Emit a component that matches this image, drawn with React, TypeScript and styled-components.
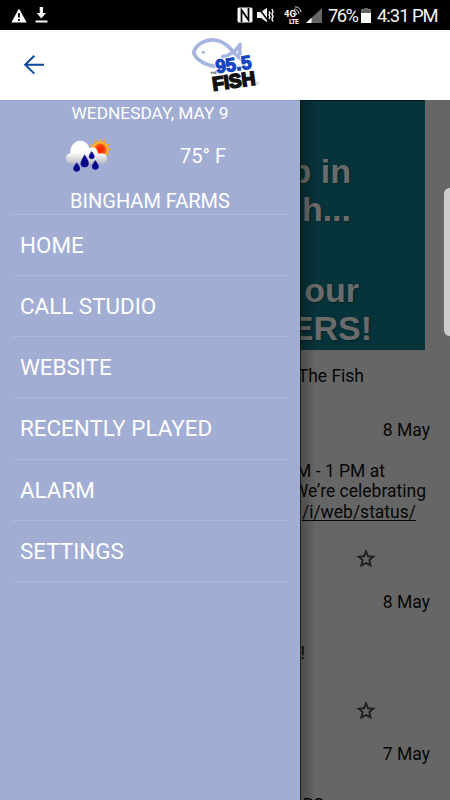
import React from "react";
import styled, { createGlobalStyle } from "styled-components";

const GlobalStyle = createGlobalStyle`
  * { box-sizing: border-box; }
  body { margin: 0; background: #666; font-family: Roboto, sans-serif; }
`;

const Screen = styled.div`
  width: 450px;
  height: 800px;
  display: flex;
  flex-direction: column;
  overflow: hidden;
`;

const StatusBar = styled.header`
  height: 30px;
  flex: none;
  background: #000;
  color: #f4f4f4;
  display: flex;
  align-items: center;
  padding: 0 12px 0 11px;
  line-height: 30px;
  white-space: nowrap;
`;

const StatusIcon = styled.svg<{ $gap?: number }>`
  display: block;
  flex: none;
  margin-right: ${(p) => p.$gap ?? 0}px;
`;

const StatusText = styled.span<{ $width: number; $gap?: number; $tracking: number }>`
  width: ${(p) => p.$width}px;
  margin-right: ${(p) => p.$gap ?? 0}px;
  font-size: 18.4px;
  letter-spacing: ${(p) => p.$tracking}px;
  padding-top: 2px;
`;

const Spacer = styled.div`
  flex: 1;
`;

const AppBar = styled.nav`
  height: 70px;
  flex: none;
  background: #fff;
  display: grid;
  grid-template-columns: 180px 90px 1fr;
  align-items: center;
`;

const BackButton = styled.button`
  border: 0;
  background: none;
  padding: 0 0 0 23px;
  display: flex;
`;

const Logo = styled.svg`
  display: block;
`;

const Body = styled.main`
  flex: 1;
  min-height: 0;
  display: grid;
  grid-template-columns: 300px 150px;
`;

const Drawer = styled.aside`
  background: #a2add4;
  color: #fff;
  box-shadow: inset 0 1px 0 #94a0cf;
`;

const Weather = styled.section`
  height: 113.6px;
  display: flex;
  flex-direction: column;
  align-items: center;
`;

const WeatherDate = styled.div`
  height: 26px;
  font-size: 17.3px;
  line-height: 26px;
`;

const Conditions = styled.div`
  height: 60px;
  width: 100%;
  display: flex;
  align-items: center;
  padding-left: 64px;
`;

const Temperature = styled.span`
  margin-left: 68px;
  font-size: 20px;
`;

const City = styled.div`
  height: 27px;
  font-size: 20px;
  line-height: 30px;
`;

const Menu = styled.ul`
  list-style: none;
  margin: 0 12px;
  padding: 0;
  border-top: 1px solid #adb8da;
`;

const MenuItem = styled.li`
  height: 61.25px;
  padding-left: 8px;
  font-size: 22.4px;
  line-height: 61px;
  border-bottom: 1px solid #adb8da;
  white-space: nowrap;
`;

const Feed = styled.section`
  position: relative;
  background: #666;
  color: #060606;
  overflow: hidden;
  display: flex;
  flex-direction: column;
`;

const DrawerShadow = styled.div`
  position: absolute;
  inset: 0 auto 0 0;
  width: 16px;
  border-left: 1px solid rgba(20, 20, 0, 0.8);
  background: linear-gradient(to right, rgba(0, 0, 0, 0.25), rgba(0, 0, 0, 0));
`;

const ScrollHandle = styled.div`
  position: absolute;
  top: 88px;
  right: -6px;
  width: 12px;
  height: 148px;
  border-radius: 6px;
  background: #cdcdcd;
  box-shadow: 0 0 1px #999;
`;

const Banner = styled.div`
  width: 125px;
  height: 250px;
  flex: none;
  background: #07333a;
  border-top: 1px solid #031b1f;
  padding-top: 51px;
  color: #6b6b6b;
  font: bold 34px/38px "Liberation Sans", Arial, sans-serif;
  text-shadow: 1px 1px 2px rgba(0, 0, 0, 0.3);
`;

const BannerLine = styled.div<{ $right: number; $top?: number }>`
  display: flex;
  justify-content: flex-end;
  padding-right: ${(p) => p.$right}px;
  margin-top: ${(p) => p.$top ?? 0}px;
  white-space: pre;
`;

const FeedLine = styled.div<{ $top?: number; $right: number }>`
  height: 20.5px;
  flex: none;
  margin-top: ${(p) => p.$top ?? 0}px;
  padding-right: ${(p) => p.$right}px;
  display: flex;
  justify-content: flex-end;
  font-size: 17.5px;
  line-height: 20.5px;
  white-space: pre;
`;

const FeedLink = styled.span`
  text-decoration: underline;
  text-decoration-thickness: 1px;
  text-underline-offset: 2px;
  text-decoration-skip-ink: none;
`;

const StarRow = styled.div<{ $top: number }>`
  flex: none;
  height: 20px;
  margin-top: ${(p) => p.$top}px;
  padding-left: 56px;
`;

const Star = () => (
  <svg width="20" height="20" viewBox="0 0 20 20">
    <path
      d="M10 2.4 12 7.3 17.3 7.7 13.3 11.1 14.6 16.4 10 14 5.4 16.4 6.7 11.1 2.7 7.7 8 7.3Z"
      fill="none"
      stroke="#202020"
      strokeWidth="1.9"
    />
  </svg>
);

const WeatherIcon = () => (
  <svg width="48" height="38" viewBox="0 0 144 114">
    <defs>
      <linearGradient id="cloud" x1="0" y1="0" x2="0" y2="1">
        <stop offset="0.5" stopColor="#fff" />
        <stop offset="1" stopColor="#b9b9c2" />
      </linearGradient>
      <radialGradient id="sun">
        <stop offset="0.3" stopColor="#ff2500" />
        <stop offset="0.72" stopColor="#f45a18" />
        <stop offset="1" stopColor="#ffcf3a" />
      </radialGradient>
    </defs>
    <path
      d="M109 2 113 16 124 6 124 20 138 22 130 31 143 38 130 43 137 55 122 54 118 68 75 50 84 33 76 22 91 23 91 9 104 16Z"
      fill="#f3a52a"
    />
    <circle cx="109" cy="38" r="22" fill="url(#sun)" />
    <path
      d="M20 80C2 76 0 53 19 49C17 27 35 7 55 12C68 15 74 25 76 34C91 24 103 38 102 51C118 44 132 54 128 69C126 79 116 81 106 81Z"
      fill="url(#cloud)"
    />
    <g fill="#07078b" stroke="#2633a5" strokeWidth="1">
      <path d="M62 53Q75 72 74 79A12 12 0 0 1 50 79Q50 72 62 53Z" />
      <path d="M83 43Q91 54 91 58A8 8 0 0 1 75 58Q75 54 83 43Z" />
      <path d="M38 77Q48 89 48 94A10 10 0 0 1 28 94Q28 89 38 77Z" />
      <path d="M94 70Q104 83 104 88A10 10 0 0 1 84 88Q84 83 94 70Z" />
    </g>
  </svg>
);

const StationLogo = () => (
  <Logo width="90" height="70" viewBox="0 0 270 210">
    <g fill="none" stroke="#a6b4e2" strokeLinecap="round" strokeLinejoin="round">
      <path
        d="M104 109C73 105 45 86 41 67C49 42 75 28 102 30C133 32 153 57 166 72C175 83 184 88 194 92"
        strokeWidth="11"
      />
      <path d="M128 80C150 76 167 65 180 43C178 60 178 74 184 88" strokeWidth="11" />
    </g>
    <circle cx="70" cy="67" r="5" fill="#a6b4e2" />
    <g transform="rotate(-8 110 128)" fontFamily="Liberation Sans, Arial, sans-serif" fontWeight="bold">
      <text
        x="109" y="130" fontSize="57" textLength="108" lengthAdjust="spacingAndGlyphs"
        fill="#1846c2" stroke="#fff" strokeWidth="9" strokeLinejoin="round" paintOrder="stroke"
      >
        95.5
      </text>
      <text
        x="109" y="130" fontSize="57" textLength="108" lengthAdjust="spacingAndGlyphs"
        fill="#1846c2" stroke="#1846c2" strokeWidth="3.5"
      >
        95.5
      </text>
      <text x="91" y="131" fontSize="11" textLength="19" lengthAdjust="spacingAndGlyphs" fill="#222">THE</text>
      <text
        x="92" y="180" fontSize="58" textLength="130" lengthAdjust="spacingAndGlyphs"
        fill="#111" stroke="#111" strokeWidth="5"
      >
        FISH
      </text>
    </g>
    <circle cx="232" cy="160" r="4" fill="none" stroke="#999" strokeWidth="1.5" />
  </Logo>
);

const menuItems = ["HOME", "CALL STUDIO", "WEBSITE", "RECENTLY PLAYED", "ALARM", "SETTINGS"];

export default function App() {
  return (
    <Screen>
      <GlobalStyle />
      <StatusBar>
        <StatusIcon width="16" height="15" viewBox="0 0 16 15" $gap={8}>
          <path d="M8 .5 15.6 14.5H.4Z" fill="#fff" />
          <path d="M8 5V9.5M8 11V12.8" stroke="#000" strokeWidth="1.8" />
        </StatusIcon>
        <StatusIcon width="13" height="16" viewBox="0 0 13 16">
          <path d="M4.7 0H8V6H11L6.3 11.5 1.7 6H4.7ZM.5 13.5H12.5V15.5H.5Z" fill="#f4f4f4" />
        </StatusIcon>
        <Spacer />
        <StatusIcon width="16" height="16" viewBox="0 0 16 16" $gap={4}>
          <path d="M2 .5H14Q15.5 .5 15.5 2V14Q15.5 15.5 14 15.5H2Q.5 15.5 .5 14V2Q.5 .5 2 .5Z" fill="#f4f4f4" />
          <path d="M4.5 15V3L11.5 13V1" fill="none" stroke="#000" strokeWidth="1.7" />
        </StatusIcon>
        <StatusIcon width="17" height="16" viewBox="0 0 17 16" $gap={10}>
          <path d="M0 5H4L10 .8V15.2L4 11H0Z" fill="#f4f4f4" />
          <path d="M1 0 12 15" stroke="#000" strokeWidth="1.4" />
          <path d="M12 4.5 13 6 12 8 13 10 12 12M15 2 16 4.5 15 7 16 9.5 15 12 16 14.5" fill="none" stroke="#f4f4f4" strokeWidth="1.5" />
        </StatusIcon>
        <StatusIcon width="18" height="18" viewBox="0 0 18 18" $gap={4}>
          <text x="0" y="11" fill="#fff" fontSize="9.5" fontWeight="bold" textLength="12">4G</text>
          <text x="5" y="17.5" fill="#fff" fontSize="7" fontWeight="bold" textLength="10">LTE</text>
          <path d="M10 3Q14 3 15 8M11 .8Q16 1 17 6M10 5.5Q12 5.5 13 9" fill="none" stroke="#ddd" strokeWidth="1" />
        </StatusIcon>
        <StatusIcon width="16" height="15" viewBox="0 0 16 15" $gap={6}>
          <path d="M0 15 16 0V15Z" fill="#666" />
          <path d="M0 15 5.5 9.8V15Z" fill="#fff" />
        </StatusIcon>
        <StatusText $width={30} $gap={3} $tracking={-1.6}>76%</StatusText>
        <StatusIcon width="10" height="15" viewBox="0 0 10 15" $gap={6}>
          <path d="M3 0H7V1.5H10V15H0V1.5H3Z" fill="#fff" />
          <path d="M3 0H7V1.5H10V5H0V1.5H3Z" fill="#666" />
        </StatusIcon>
        <StatusText $width={61} $tracking={-1}>4:31 PM</StatusText>
      </StatusBar>
      <AppBar>
        <BackButton aria-label="Back">
          <svg width="22" height="20" viewBox="0 0 22 20">
            <path d="M21 9.7H2.2M11.3 .8 2.2 9.7 11.3 18.6" fill="none" stroke="#0f47a1" strokeWidth="2" />
          </svg>
        </BackButton>
        <StationLogo />
      </AppBar>
      <Body>
        <Drawer>
          <Weather>
            <WeatherDate>WEDNESDAY, MAY 9</WeatherDate>
            <Conditions>
              <WeatherIcon />
              <Temperature>75° F</Temperature>
            </Conditions>
            <City>BINGHAM FARMS</City>
          </Weather>
          <Menu>
            {menuItems.map((label) => (
              <MenuItem key={label}>{label}</MenuItem>
            ))}
          </Menu>
        </Drawer>
        <Feed>
          <Banner>
            <BannerLine $right={74}>p in</BannerLine>
            <BannerLine $right={74}>h...</BannerLine>
            <BannerLine $right={66} $top={43}>our</BannerLine>
            <BannerLine $right={53}>ERS!</BannerLine>
          </Banner>
          <FeedLine $top={16} $right={86}>The Fish</FeedLine>
          <FeedLine $top={33.5} $right={20}>8 May</FeedLine>
          <FeedLine $top={20} $right={65}>M - 1 PM at</FeedLine>
          <FeedLine $right={24}>We’re celebrating</FeedLine>
          <FeedLine $right={34}><FeedLink>/i/web/status/</FeedLink></FeedLine>
          <StarRow $top={27}><Star /></StarRow>
          <FeedLine $top={23} $right={20}>8 May</FeedLine>
          <FeedLine $top={30} $right={145}>!</FeedLine>
          <StarRow $top={38}><Star /></StarRow>
          <FeedLine $top={23} $right={20}>7 May</FeedLine>
          <FeedLine $top={30} $right={126}>RS</FeedLine>
          <DrawerShadow />
          <ScrollHandle />
        </Feed>
      </Body>
    </Screen>
  );
}
